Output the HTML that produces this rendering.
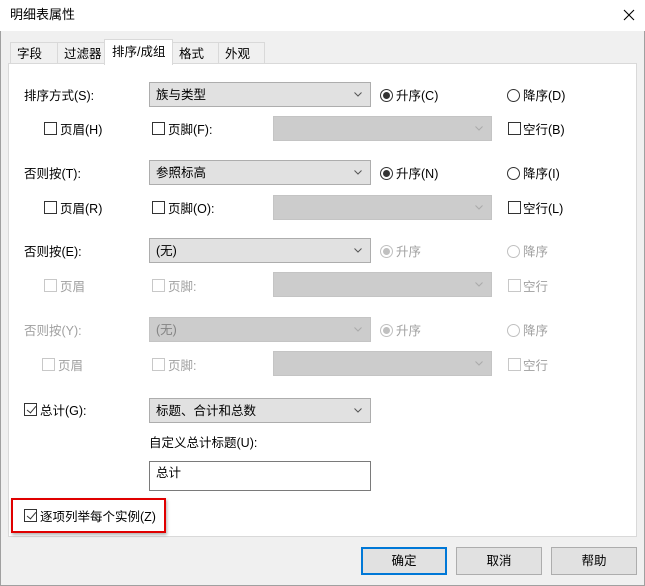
<!DOCTYPE html>
<html><head><meta charset="utf-8"><style>
*{box-sizing:border-box;margin:0;padding:0}
body{width:645px;height:586px;background:#f0f0f0;font-family:"Liberation Sans","Noto Sans CJK SC",sans-serif;font-size:12.5px;color:#000;position:relative;overflow:hidden}
.a{position:absolute;white-space:nowrap}
.t{line-height:16px;padding-top:1px}
.g{color:#a0a0a0}
.cb{position:absolute;width:13px;height:13px;border:1px solid #333;background:#fff}
.cb.d{border-color:#c8c8c8}
.rd{position:absolute;width:13px;height:13px;border:1px solid #333;border-radius:50%;background:#fff}
.rd.on::after{content:"";position:absolute;left:2px;top:2px;width:7px;height:7px;border-radius:50%;background:#333}
.rd.d{border-color:#c0c0c0}
.rd.d.on::after{background:#c0c0c0}
.cmb{position:absolute;background:#e1e1e1;border:1px solid #adadad;padding-left:6px;line-height:25px}
.cmb.d{background:#cccccc;border-color:#c4c4c4;color:#838383}
.cmb svg{position:absolute;right:8px;top:9px}
.tab{position:absolute;top:42px;height:22px;border:1px solid #d9d9d9;border-bottom:none;background:#f0f0f0;padding-left:6px;line-height:23px}
.btn{position:absolute;top:547px;height:28px;width:86px;background:#e1e1e1;border:1px solid #adadad;text-align:center;line-height:27px}
.ck::after{content:"";position:absolute;width:4px;height:8px;border:solid #333;border-width:0 1.3px 1.3px 0;transform:rotate(40deg);left:4px;top:0px}
</style></head><body>
<div class="a" style="left:0;top:0;width:645px;height:31px;background:#fff"></div>
<div class="a t" style="left:10px;top:6px;font-size:13px">明细表属性</div>
<svg class="a" style="left:623px;top:9px" width="12" height="12"><path d="M1 1L11 11M11 1L1 11" stroke="#000" stroke-width="1.1"/></svg>
<div class="a" style="left:0;top:31px;width:1px;height:555px;background:#a0a0a0"></div>
<div class="a" style="left:644px;top:31px;width:1px;height:555px;background:#a0a0a0"></div>
<div class="a" style="left:0;top:585px;width:645px;height:1px;background:#a0a0a0"></div>

<div class="tab" style="left:10px;width:48px">字段</div>
<div class="tab" style="left:57px;width:48px">过滤器</div>
<div class="tab" style="left:172px;width:47px">格式</div>
<div class="tab" style="left:218px;width:47px">外观</div>
<div class="a" style="left:8px;top:63px;width:629px;height:474px;background:#fff;border:1px solid #d9d9d9"></div>
<div class="a" style="left:104px;top:39px;width:69px;height:26px;background:#fff;border:1px solid #d9d9d9;border-bottom:none;padding-left:7px;line-height:25px">排序/成组</div>

<!-- row1 -->
<div class="a t" style="left:24px;top:87px">排序方式(S):</div>
<div class="cmb" style="left:149px;top:82px;width:222px;height:25px">族与类型<svg width="8" height="5"><path d="M0.5 0.5L4 4L7.5 0.5" stroke="#555" fill="none"/></svg></div>
<div class="rd on" style="left:380px;top:89px"></div><div class="a t" style="left:396px;top:87px">升序(C)</div>
<div class="rd" style="left:507px;top:89px"></div><div class="a t" style="left:523px;top:87px">降序(D)</div>
<div class="cb" style="left:44px;top:122px"></div><div class="a t" style="left:60px;top:121px">页眉(H)</div>
<div class="cb" style="left:152px;top:122px"></div><div class="a t" style="left:168px;top:121px">页脚(F):</div>
<div class="cmb d" style="left:273px;top:116px;width:219px;height:25px"><svg width="8" height="5"><path d="M0.5 0.5L4 4L7.5 0.5" stroke="#aaa" fill="none"/></svg></div>
<div class="cb" style="left:508px;top:122px"></div><div class="a t" style="left:523px;top:121px">空行(B)</div>

<!-- row2 -->
<div class="a t" style="left:24px;top:165px">否则按(T):</div>
<div class="cmb" style="left:149px;top:160px;width:222px;height:25px">参照标高<svg width="8" height="5"><path d="M0.5 0.5L4 4L7.5 0.5" stroke="#555" fill="none"/></svg></div>
<div class="rd on" style="left:380px;top:167px"></div><div class="a t" style="left:396px;top:165px">升序(N)</div>
<div class="rd" style="left:507px;top:167px"></div><div class="a t" style="left:523px;top:165px">降序(I)</div>
<div class="cb" style="left:44px;top:201px"></div><div class="a t" style="left:60px;top:200px">页眉(R)</div>
<div class="cb" style="left:152px;top:201px"></div><div class="a t" style="left:168px;top:200px">页脚(O):</div>
<div class="cmb d" style="left:273px;top:195px;width:219px;height:25px"><svg width="8" height="5"><path d="M0.5 0.5L4 4L7.5 0.5" stroke="#aaa" fill="none"/></svg></div>
<div class="cb" style="left:508px;top:201px"></div><div class="a t" style="left:523px;top:200px">空行(L)</div>

<!-- row3 -->
<div class="a t" style="left:24px;top:243px">否则按(E):</div>
<div class="cmb" style="left:149px;top:238px;width:222px;height:25px">(无)<svg width="8" height="5"><path d="M0.5 0.5L4 4L7.5 0.5" stroke="#555" fill="none"/></svg></div>
<div class="rd d on" style="left:380px;top:245px"></div><div class="a t g" style="left:396px;top:243px">升序</div>
<div class="rd d" style="left:507px;top:245px"></div><div class="a t g" style="left:523px;top:243px">降序</div>
<div class="cb d" style="left:44px;top:279px"></div><div class="a t g" style="left:60px;top:278px">页眉</div>
<div class="cb d" style="left:152px;top:279px"></div><div class="a t g" style="left:168px;top:278px">页脚:</div>
<div class="cmb d" style="left:273px;top:272px;width:219px;height:25px"><svg width="8" height="5"><path d="M0.5 0.5L4 4L7.5 0.5" stroke="#aaa" fill="none"/></svg></div>
<div class="cb d" style="left:508px;top:279px"></div><div class="a t g" style="left:523px;top:278px">空行</div>

<!-- row4 -->
<div class="a t g" style="left:24px;top:322px">否则按(Y):</div>
<div class="cmb d" style="left:149px;top:317px;width:222px;height:25px">(无)<svg width="8" height="5"><path d="M0.5 0.5L4 4L7.5 0.5" stroke="#aaa" fill="none"/></svg></div>
<div class="rd d on" style="left:380px;top:324px"></div><div class="a t g" style="left:396px;top:322px">升序</div>
<div class="rd d" style="left:507px;top:324px"></div><div class="a t g" style="left:523px;top:322px">降序</div>
<div class="cb d" style="left:42px;top:358px"></div><div class="a t g" style="left:58px;top:357px">页眉</div>
<div class="cb d" style="left:152px;top:358px"></div><div class="a t g" style="left:168px;top:357px">页脚:</div>
<div class="cmb d" style="left:273px;top:351px;width:219px;height:25px"><svg width="8" height="5"><path d="M0.5 0.5L4 4L7.5 0.5" stroke="#aaa" fill="none"/></svg></div>
<div class="cb d" style="left:508px;top:358px"></div><div class="a t g" style="left:523px;top:357px">空行</div>

<!-- total -->
<div class="cb ck" style="left:24px;top:403px"></div><div class="a t" style="left:40px;top:402px">总计(G):</div>
<div class="cmb" style="left:149px;top:398px;width:222px;height:25px">标题、合计和总数<svg width="8" height="5"><path d="M0.5 0.5L4 4L7.5 0.5" stroke="#555" fill="none"/></svg></div>
<div class="a t" style="left:149px;top:434px">自定义总计标题(U):</div>
<div class="a" style="left:149px;top:461px;width:222px;height:30px;border:1px solid #7a7a7a;background:#fff;padding:3px 0 0 6px;line-height:16px">总计</div>

<div class="a" style="left:11px;top:498px;width:155px;height:35px;border:2px solid #e00000;box-shadow:1px 2px 3px rgba(0,0,0,.3)"></div>
<div class="cb ck" style="left:24px;top:509px"></div><div class="a t" style="left:40px;top:508px">逐项列举每个实例(Z)</div>

<div class="btn" style="left:361px;border:2px solid #0078d7;line-height:25px">确定</div>
<div class="btn" style="left:456px">取消</div>
<div class="btn" style="left:551px">帮助</div>
</body></html>
